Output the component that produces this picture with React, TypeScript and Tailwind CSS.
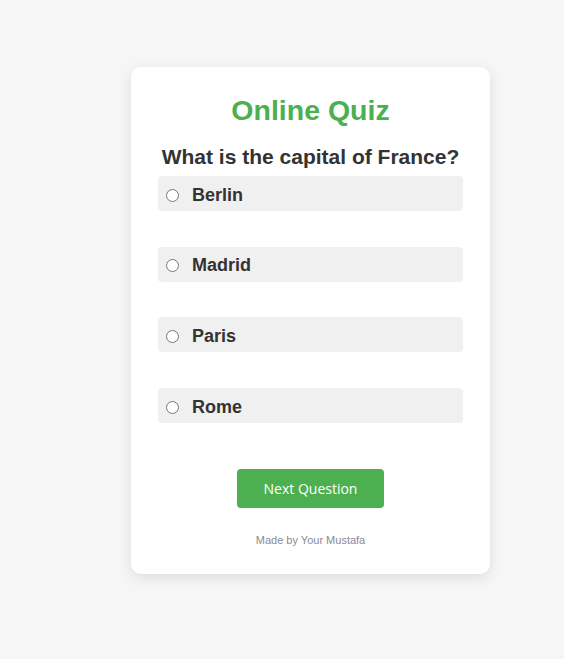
const options = ["Berlin", "Madrid", "Paris", "Rome"];

export default function App() {
	return (
		<div className="min-h-[659px] bg-[#f6f6f6] pt-[67px] font-['Liberation_Sans',Arial,sans-serif] text-[#333]">
			<div className="ml-[131px] w-[359px] rounded-[10px] bg-white px-[27px] pt-[27px] pb-[27px] shadow-[0_4px_14px_rgba(0,0,0,0.1)]">
				<h1 className="text-center text-[28.5px] leading-[32px] font-bold text-[#4caf50]">Online Quiz</h1>

				<p className="mt-[19px] text-center text-[21px] leading-[24px] font-bold">What is the capital of France?</p>

				<div className="mt-[7px] flex flex-col gap-[35.7px]">
					{options.map((opt) => (
						<label
							key={opt}
							className="flex h-[35px] items-center rounded-[4px] bg-[#f0f0f0] pt-[3px] pl-[8px] text-[18px] font-bold"
						>
							<input type="radio" name="answer" className="h-[13px] w-[13px]" />
							<span className="ml-[13px]">{opt}</span>
						</label>
					))}
				</div>

				<div className="mt-[46px] flex justify-center">
					<button className="h-[39px] w-[147px] rounded-[4px] bg-[#4caf50] font-['Open_Sans',sans-serif] text-[14px] text-white">
						Next Question
					</button>
				</div>

				<p className="mt-[25px] text-center text-[11px] leading-[14px] text-[#8a8a95]">Made by Your Mustafa</p>
			</div>
		</div>
	);
}
